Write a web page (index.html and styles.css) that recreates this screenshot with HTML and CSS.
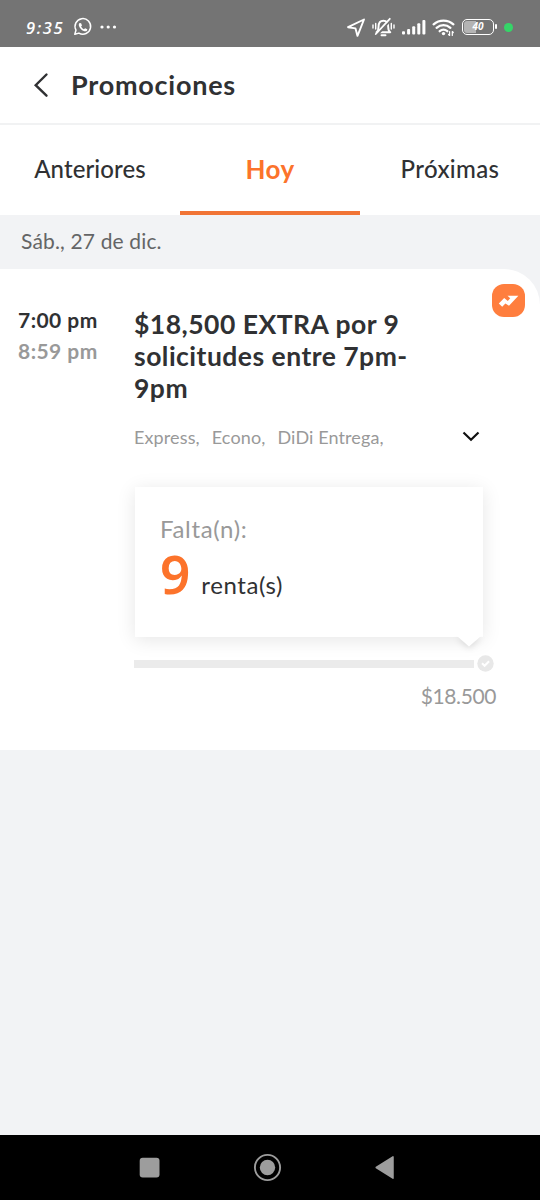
FILE: index.html
```html
<!DOCTYPE html>
<html lang="es">
<head>
<meta charset="utf-8">
<title>Promociones</title>
<link rel="stylesheet" href="styles.css">
</head>
<body>
<div class="screen">
  <div class="status">
    <span class="clock">9:35</span>
    <svg class="status-icons-left" width="46" height="20" viewBox="72 17 46 20" fill="none" stroke="#fff">
      <path d="M74.8 34.3l1.2-4.2a7.8 7.8 0 1 1 2.9 3Z" stroke-width="1.5" stroke-linejoin="round"/>
      <path d="M79.5 23.1c-1.5 1.5-.6 4 1.6 6.100s4.600 2.900 6 1.300l.2-1.200-2.200-1.100-1.200 1c-1.400-.5-2.300-1.400-2.800-2.600l.9-1-.9-2.400Z" fill="#fff" stroke="none"/>
      <g fill="#fff" stroke="none"><circle cx="102" cy="27" r="1.6"/><circle cx="108.200" cy="27" r="1.600"/><circle cx="114.500" cy="27" r="1.600"/></g>
    </svg>
    <div class="status-right">
      <svg width="110" height="22" viewBox="346 16 110 22" fill="none" stroke="#fff" stroke-linecap="round" stroke-linejoin="round">
        <path d="M364 19.500L348 27.200l7.500 1.200 2 7.500Z" stroke-width="1.900"/>
        <path d="M376.500 32.200c1.600-1 2-2.500 2-5.200 0-3.900 1.700-6.300 4.900-6.300s4.800 2.300 4.800 6.300c0 2.700.5 4.200 2.100 5.200ZM381.500 35.200h4" stroke-width="1.900"/>
        <path d="M377.200 35L391 19.800" stroke="#747474" stroke-width="2"/>
        <path d="M375.800 34L389.800 18.800" stroke-width="1.800"/>
        <path d="M373 25v3M375.700 23.500v5.500M391.300 23.500v5.500M394 25v3" stroke-width="1.400"/>
        <g fill="#fff" stroke="none"><rect x="402" y="31.300" width="3" height="3.200" rx="1"/><rect x="407.100" y="28.900" width="3" height="5.600" rx="1"/><rect x="412.200" y="26.200" width="3" height="8.300" rx="1"/><rect x="417.300" y="23.200" width="3" height="11.300" rx="1"/><rect x="422.400" y="20" width="3" height="14.500" rx="1"/></g>
        <path d="M433.600 24.300c5.800-5 14-5 19.800 0M436.600 27.800c4.100-3.600 9.700-3.600 13.800 0M439.700 31.200c2.400-2 5.200-2 7.600 0" stroke-width="2.300"/>
        <circle cx="443.500" cy="33.600" r="1.700" fill="#fff" stroke="none"/>
        <path d="M449.600 31.500v4l-1-1M452.300 35.500v-4l1 1" stroke-width="1.200"/>
      </svg>
      <span class="battery"><span>40</span></span>
      <i class="live-dot"></i>
    </div>
  </div>

  <header class="header">
    <svg width="20" height="28" viewBox="0 0 20 28" fill="none" stroke="#303133" stroke-width="2.400" stroke-linecap="round"><path d="M15.500 3.500L4.700 14.200l10.800 10.500"/></svg>
    <h1>Promociones</h1>
  </header>

  <nav class="tabs">
    <a class="tab">Anteriores</a>
    <a class="tab active">Hoy</a>
    <a class="tab next">Próximas</a>
  </nav>

  <div class="date"><span>Sáb., 27 de dic.</span></div>

  <main class="card">
    <div class="times"><div class="start">7:00 pm</div><div class="end">8:59 pm</div></div>
    <section class="promo">
      <h2>$18,500 EXTRA por 9<br>solicitudes entre 7pm-<br>9pm</h2>
      <div class="services">
        <span>Express,</span><span>Econo,</span><span>DiDi Entrega,</span>
        <svg class="chevron" width="20" height="14" viewBox="0 0 20 14" fill="none" stroke="#111" stroke-width="2.200"><path d="M2.500 2.500l7.500 7.300L17.500 2.500"/></svg>
      </div>
      <div class="bubble">
        <div class="label">Falta(n):</div>
        <div class="amount"><b>9</b><span>renta(s)</span></div>
        <svg class="pointer" width="26" height="12" viewBox="0 0 26 12"><path d="M1 0h24L13 10.500Z" fill="#fff"/></svg>
      </div>
      <div class="progress">
        <i></i>
        <svg width="17" height="17" viewBox="0 0 17 17"><circle cx="8.500" cy="8.500" r="8.200" fill="#e8e8e8"/><path d="M5 8.300l2.600 2.500 4.500-4.600" fill="none" stroke="#fff" stroke-width="2"/></svg>
      </div>
      <div class="reward">$18.500</div>
    </section>
    <span class="badge"><svg width="33" height="33" viewBox="0 0 33 33"><path d="M6.800 19.500l5.400-5.400 3.600 2.800 2.400-2.600-2.700-2.600H26.400L17 21.800l-3.600-2.400-3.200 3.300Z" fill="#fff"/></svg></span>
  </main>

  <footer class="navbar">
    <svg width="540" height="65" viewBox="0 0 540 65" fill="#9d9d9d"><rect x="139.700" y="22.700" width="19.800" height="19.800" rx="3"/><circle cx="267.500" cy="32.500" r="12.600" fill="none" stroke="#9d9d9d" stroke-width="1.900"/><circle cx="267.500" cy="32.500" r="7.700"/><path d="M376.200 32.500L393 21.800v21.400Z" stroke="#9d9d9d" stroke-width="1.500" stroke-linejoin="round"/></svg>
  </footer>
</div>
</body>
</html>
```
FILE: styles.css
```css
* { box-sizing: border-box; }
body { margin: 0; background: #f2f3f5; color: #303133; font-family: Lato, "Noto Sans", sans-serif; }
.screen { width: 540px; height: 1200px; display: flex; flex-direction: column; overflow: hidden; }
.status { height: 47px; padding: 7px 27px 0 26px; display: flex; align-items: center; background: #747474; color: #fff; }
.clock { width: 46px; font: italic 600 16.5px "Open Sans", sans-serif; letter-spacing: 1.6px; }
.status-icons-left { flex: none; }
.status-right { margin-left: auto; display: flex; align-items: center; }
.battery { position: relative; width: 32px; height: 16px; margin-left: 6px; border: 1.5px solid #fff; border-radius: 5px; background: linear-gradient(90deg, #b4b4b4 42%, transparent 42%); background-clip: content-box; padding: 1px; font: italic 700 10px "Open Sans", sans-serif; text-align: center; }
.battery::after { content: ""; position: absolute; right: -4px; top: 4px; width: 2px; height: 5px; background: #fff; border-radius: 1px; }
.battery span { display: block; height: 11px; line-height: 11px; }
.live-dot { width: 9px; height: 9px; margin-left: 10px; border-radius: 50%; background: #35d568; }
.header { height: 78px; padding: 0 31px; display: flex; align-items: center; gap: 20px; background: #fff; border-bottom: 2px solid #f1f2f3; }
h1 { margin: 0; font-size: 27px; line-height: 34px; font-weight: 700; letter-spacing: .75px; }
.tabs { height: 90px; display: grid; grid-template-columns: repeat(3, 1fr); background: #fff; }
.tab { padding-top: 27px; text-align: center; font-size: 24px; line-height: 34px; font-weight: 500; letter-spacing: .1px; }
.tab.next { letter-spacing: .35px; }
.tab.active { color: #fc732b; font-size: 26px; font-weight: 700; letter-spacing: .4px; border-bottom: 4px solid #f17435; }
.date { height: 54px; padding: 11px 21px; font-size: 21px; line-height: 30px; letter-spacing: .15px; color: #646566; }
.card { position: relative; height: 481px; padding: 39px 18px 0; display: grid; grid-template-columns: 116px 1fr; background: #fff; border-top-right-radius: 36px; }
.times { margin-top: -4px; font-size: 21px; line-height: 31px; font-weight: 700; letter-spacing: .45px; }
.end { color: #999; }
h2 { margin: 0; font-size: 26.5px; line-height: 32px; font-weight: 700; letter-spacing: .48px; white-space: nowrap; }
.services { height: 30px; margin-top: 18px; padding-right: 24px; display: flex; align-items: center; gap: 12px; font-size: 18px; letter-spacing: .12px; color: #999; }
.chevron { margin-left: auto; margin-right: 17px; }
.bubble { position: relative; width: 348px; height: 150px; margin: 35px 0 0 1px; padding: 27px 25px; background: #fff; box-shadow: 0 3px 18px rgba(0, 0, 0, .1); }
.label { font-size: 24px; line-height: 30px; letter-spacing: .65px; color: #999; }
.amount { display: flex; align-items: baseline; gap: 11px; height: 60px; line-height: 60px; font-size: 24px; letter-spacing: .6px; }
.amount b { font-family: "Noto Sans", sans-serif; font-size: 53px; font-weight: 600; letter-spacing: 0; color: #fc732b; }
.pointer { position: absolute; right: 1px; top: 149px; filter: drop-shadow(0 2px 3px rgba(0, 0, 0, .12)); clip-path: inset(0 -8px -10px -8px); }
.progress { width: 360px; height: 17px; margin-top: 18px; display: flex; align-items: center; gap: 3px; }
.progress i { flex: 1; height: 8px; background: #ebebeb; }
.reward { width: 362px; margin-top: 9px; text-align: right; font-size: 21px; line-height: 30px; letter-spacing: -.4px; color: #999; }
.badge { position: absolute; top: 15px; right: 15px; width: 33px; height: 33px; border-radius: 12px; background: #ff7e3e; }
.navbar { height: 65px; margin-top: auto; background: #000; }
.navbar svg { display: block; }
```
